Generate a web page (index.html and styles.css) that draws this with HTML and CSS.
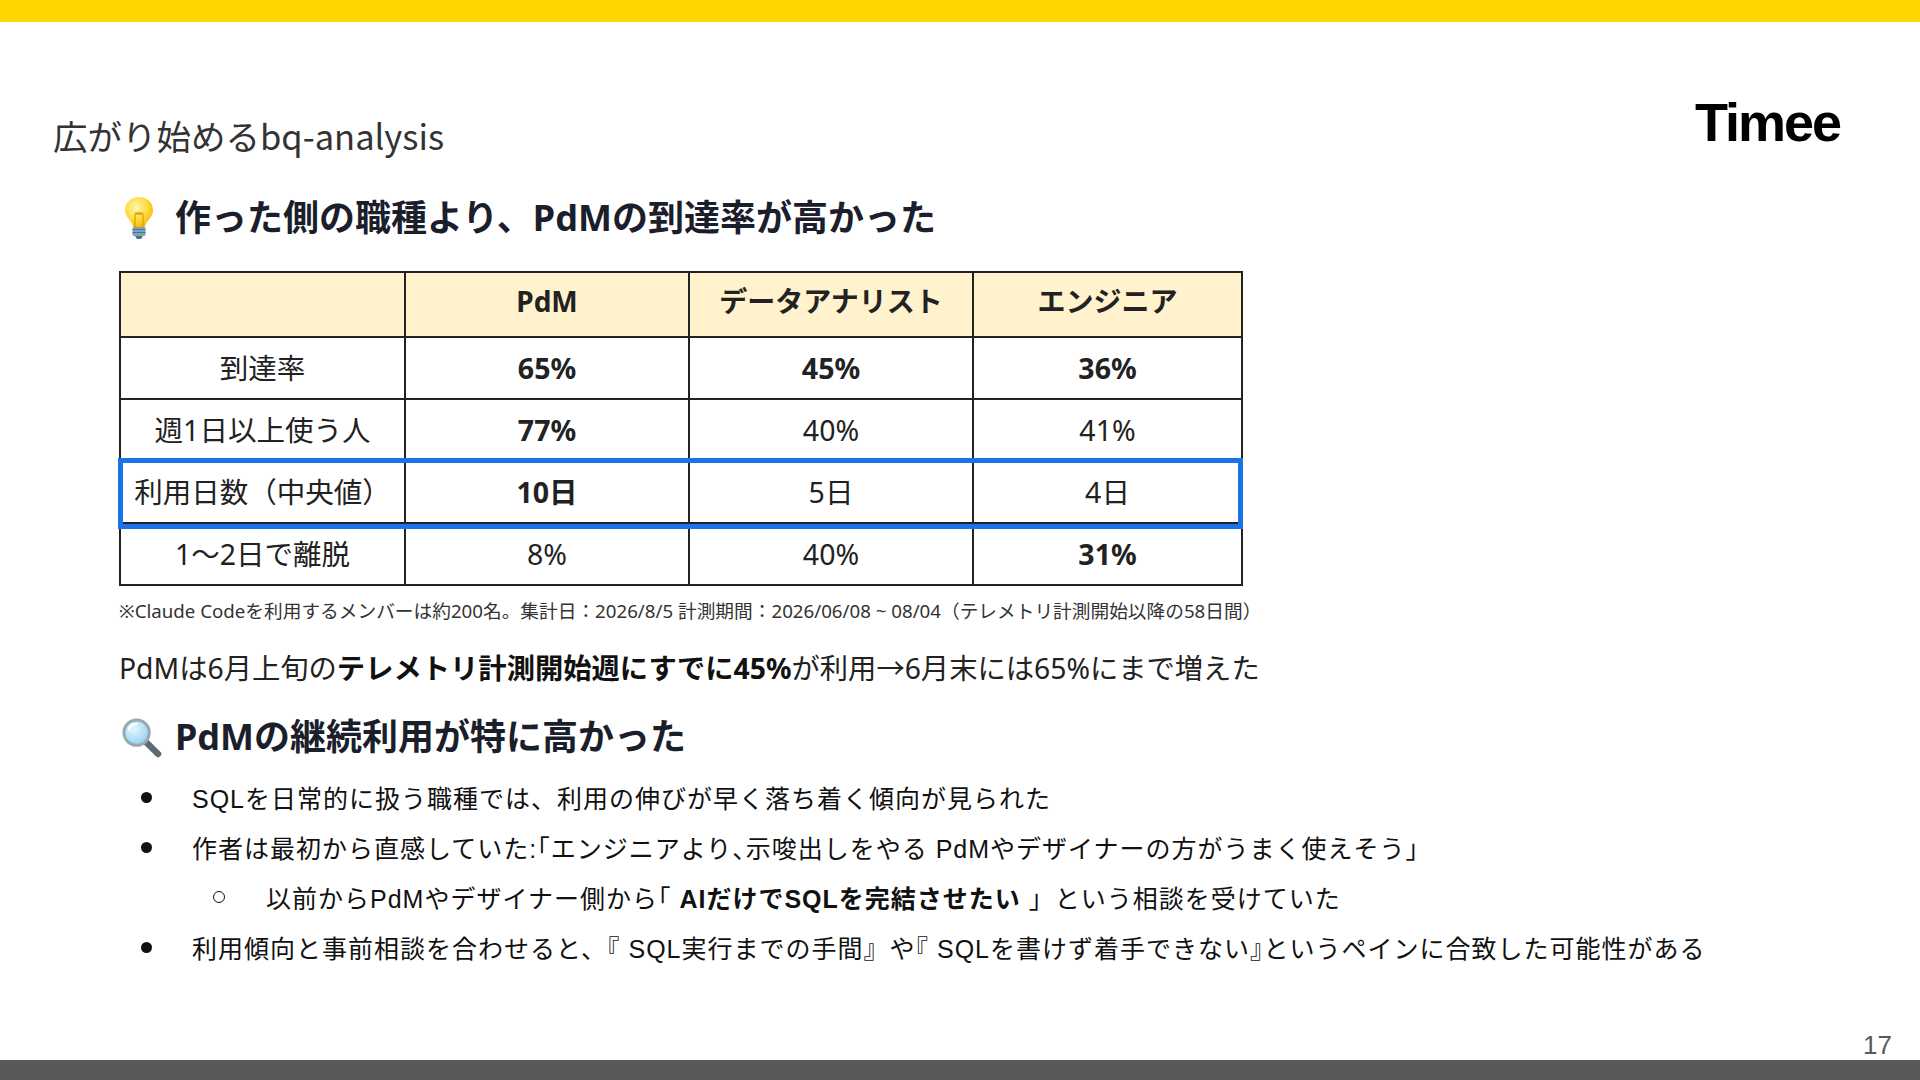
FILE: index.html
```html
<!DOCTYPE html>
<html lang="ja">
<head>
<meta charset="utf-8">
<title>広がり始めるbq-analysis</title>
<link rel="stylesheet" href="styles.css">
</head>
<body>
<div class="slide">
  <div class="topbar"></div>
  <header class="header">
    <h1 class="title">広がり始めるbq-analysis</h1>
    <div class="logo">Timee</div>
  </header>
  <main class="content">
    <h2 class="heading heading-1">
      <svg class="icon icon-bulb" viewBox="0 0 30 44" width="30" height="44" aria-hidden="true">
        <defs>
          <radialGradient id="bulbGlow" cx="0.4" cy="0.35" r="0.7">
            <stop offset="0" stop-color="#fff7b0"/>
            <stop offset="0.6" stop-color="#ffd83a"/>
            <stop offset="1" stop-color="#f5b400"/>
          </radialGradient>
        </defs>
        <path d="M15 1 C6.5 1 1 7 1 14 C1 19.5 4.5 22.5 7 26 C8.3 27.8 9 29 9 31 L21 31 C21 29 21.7 27.8 23 26 C25.5 22.5 29 19.5 29 14 C29 7 23.5 1 15 1 Z" fill="url(#bulbGlow)"/>
        <path d="M11 31 L11 20 M19 31 L19 20 M11 20 C11 16 13 16 13 19 C13 16 15 16 15 19 C15 16 17 16 17 19 C17 16 19 16 19 20" fill="none" stroke="#e0a100" stroke-width="1.3"/>
        <rect x="8.5" y="31" width="13" height="9" rx="1.5" fill="#7fa3b8"/>
        <path d="M8.5 33.5 L21.5 33.5 M8.5 36.5 L21.5 36.5" stroke="#4f7489" stroke-width="1.2"/>
        <path d="M11 40 L19 40 L17 43 L13 43 Z" fill="#4f6f80"/>
      </svg>
      <span>作った側の職種より、PdMの到達率が高かった</span>
    </h2>
    <div class="table-wrap">
      <table class="stats">
        <colgroup>
          <col class="c1"><col class="c2"><col class="c3"><col class="c4">
        </colgroup>
        <thead>
          <tr class="head-row">
            <th></th><th>PdM</th><th>データアナリスト</th><th>エンジニア</th>
          </tr>
        </thead>
        <tbody>
          <tr>
            <td>到達率</td><td class="b">65%</td><td class="b">45%</td><td class="b">36%</td>
          </tr>
          <tr>
            <td>週1日以上使う人</td><td class="b">77%</td><td>40%</td><td>41%</td>
          </tr>
          <tr>
            <td>利用日数（中央値）</td><td class="b">10日</td><td>5日</td><td>4日</td>
          </tr>
          <tr>
            <td>1〜2日で離脱</td><td>8%</td><td>40%</td><td class="b">31%</td>
          </tr>
        </tbody>
      </table>
      <div class="highlight"></div>
    </div>
    <p class="note">※Claude Codeを利用するメンバーは約200名。集計日：2026/8/5 計測期間：2026/06/08 ~ 08/04（テレメトリ計測開始以降の58日間）</p>
    <p class="lead">PdMは6月上旬の<strong>テレメトリ計測開始週にすでに45%</strong>が利用→6月末には65%にまで増えた</p>
    <h2 class="heading heading-2">
      <svg class="icon icon-glass" viewBox="0 0 42 42" width="41" height="41" aria-hidden="true">
        <defs>
          <radialGradient id="lens" cx="0.4" cy="0.35" r="0.7">
            <stop offset="0" stop-color="#e6f6ff"/>
            <stop offset="1" stop-color="#8fd0f2"/>
          </radialGradient>
        </defs>
        <line x1="25" y1="25" x2="38" y2="38" stroke="#5d6b73" stroke-width="6.5" stroke-linecap="round"/>
        <circle cx="16" cy="16" r="13" fill="url(#lens)" stroke="#9aa8b0" stroke-width="3"/>
        <path d="M8 13 C9 9 12 7 16 7" fill="none" stroke="#ffffff" stroke-width="2.2" stroke-linecap="round"/>
      </svg>
      <span>PdMの継続利用が特に高かった</span>
    </h2>
    <ul class="bullets">
      <li class="item"><span class="text">SQLを日常的に扱う職種では、利用の伸びが早く落ち着く傾向が見られた</span></li>
      <li class="item"><span class="text">作者は最初から直感していた:<span class="tp">「</span>エンジニアより<span class="tp">、</span>示唆出しをやる PdMやデザイナーの方がうまく使えそう<span class="tp">」</span></span></li>
      <li class="item sub"><span class="text">以前からPdMやデザイナー側から<span class="tp">「</span> <strong>AIだけでSQLを完結させたい</strong> 」という相談を受けていた</span></li>
      <li class="item"><span class="text">利用傾向と事前相談を合わせると、<span class="tp">『</span> SQL実行までの手間』や<span class="tp">『</span> SQLを書けず着手できない<span class="tp">』</span>というペインに合致した可能性がある</span></li>
    </ul>
  </main>
  <footer class="footer">
    <span class="page">17</span>
  </footer>
  <div class="bottombar"></div>
</div>
</body>
</html>
```

FILE: styles.css
```css
html, body {
  margin: 0;
  padding: 0;
  background: #ffffff;
}

.slide {
  width: 1920px;
  height: 1080px;
  display: flex;
  flex-direction: column;
  background: #ffffff;
  overflow: hidden;
  position: relative;
  font-family: "Noto Sans", "Noto Sans CJK JP", sans-serif;
}

.topbar {
  height: 22px;
  background: #ffd600;
  flex: none;
}

.header {
  display: flex;
  justify-content: space-between;
  align-items: flex-start;
  padding: 73px 80px 0 53px;
  flex: none;
}

.title {
  margin: 15px 0 0;
  font-family: "Noto Sans CJK JP", sans-serif;
  font-weight: 400;
  font-size: 34.5px;
  line-height: 50px;
  color: #333333;
}

.logo {
  font-family: "Liberation Sans", Arial, sans-serif;
  font-weight: 700;
  font-size: 54px;
  line-height: 54px;
  letter-spacing: -2px;
  color: #000000;
}

.content {
  flex: 1;
  padding-left: 119px;
}

.heading {
  margin: 33px 0 0;
  height: 50px;
  display: flex;
  align-items: center;
  font-family: "Noto Sans", "Noto Sans CJK JP", sans-serif;
  font-weight: 700;
  font-size: 36px;
  line-height: 50px;
  color: #1b1e2b;
}

.heading-1 .icon {
  margin-left: 5px;
  margin-right: 21px;
}

.heading-2 {
  margin-top: 24px;
}

.heading-2 .icon {
  margin-left: 2px;
  margin-right: 13px;
}

.table-wrap {
  position: relative;
  margin-top: 28px;
  width: 1122px;
}

.stats {
  border-collapse: collapse;
  table-layout: fixed;
  width: 1122px;
  font-family: "Noto Sans", "Noto Sans CJK JP", sans-serif;
  font-size: 28.5px;
  color: #222222;
}

.stats .c1 { width: 285px; }
.stats .c2 { width: 284px; }
.stats .c3 { width: 284px; }
.stats .c4 { width: 269px; }

.stats th,
.stats td {
  border: 2px solid #222222;
  text-align: center;
  padding: 0;
  line-height: 32px;
}

.stats th {
  height: 65px;
  padding-bottom: 8px;
  box-sizing: border-box;
  background: #fff2cc;
  font-weight: 700;
  font-size: 28px;
}

.stats td {
  height: 60px;
  font-weight: 400;
}

.stats td.b {
  font-weight: 700;
}

.highlight {
  position: absolute;
  left: -1px;
  top: 187px;
  width: 1125px;
  height: 71px;
  border: 5px solid #1a73e8;
  box-sizing: border-box;
  pointer-events: none;
}

.note {
  margin: 12px 0 0;
  font-family: "Noto Sans", "Noto Sans CJK JP", sans-serif;
  font-size: 18.7px;
  line-height: 26px;
  color: #333333;
}

.lead {
  margin: 24px 0 0;
  font-family: "Noto Sans", "Noto Sans CJK JP", sans-serif;
  font-size: 28.3px;
  line-height: 40px;
  color: #222222;
}

.lead strong {
  font-weight: 700;
  color: #111111;
}

.bullets {
  list-style: none;
  margin: 10px 0 0;
  padding: 0;
}

.item {
  display: flex;
  align-items: center;
  height: 50px;
  font-family: "Liberation Sans", "Noto Sans CJK JP", sans-serif;
  font-size: 25px;
  letter-spacing: 1px;
  color: #111111;
}

.item .text {
  white-space: pre;
}

.item .tp {
  font-feature-settings: "halt";
}

.item::before {
  content: "";
  flex: none;
  width: 11px;
  height: 11px;
  border-radius: 50%;
  background: #111111;
  margin-left: 22px;
  margin-right: 40px;
}

.item.sub::before {
  width: 10px;
  height: 10px;
  background: transparent;
  border: 1.5px solid #111111;
  margin-left: 94px;
  margin-right: 41px;
}

.item strong {
  font-weight: 700;
}

.footer {
  flex: none;
  display: flex;
  justify-content: flex-end;
  padding-right: 28px;
  height: 30px;
}

.page {
  font-family: "Liberation Sans", Arial, sans-serif;
  font-size: 26px;
  line-height: 30px;
  color: #595959;
}

.bottombar {
  flex: none;
  height: 20px;
  background: #595959;
}
```
